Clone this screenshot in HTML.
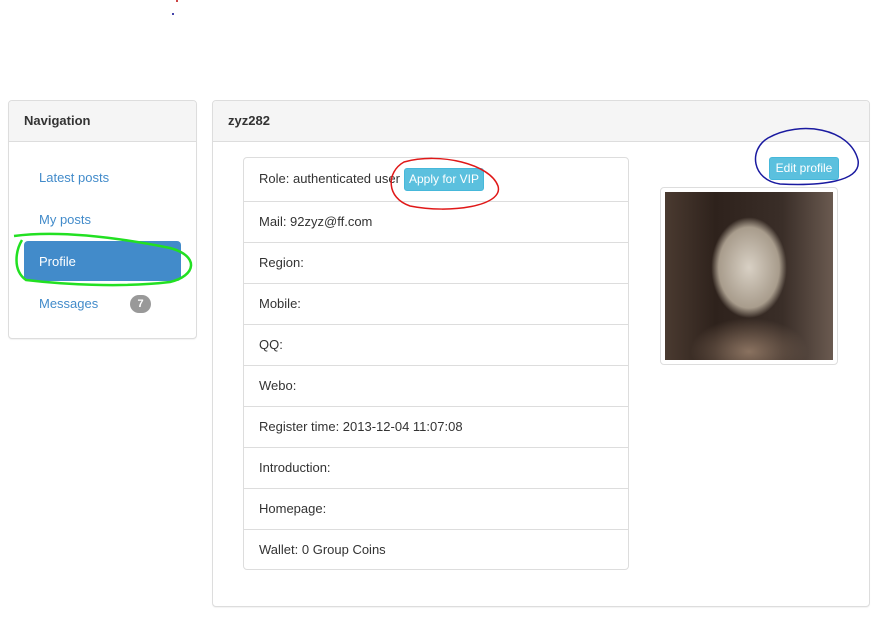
<!DOCTYPE html>
<html><head><style>
body{margin:0;width:880px;height:631px;background:#fff;font-family:"Liberation Sans",Arial,sans-serif;font-size:13px;color:#333;position:relative;overflow:hidden}
.panel{position:absolute;border:1px solid #ddd;border-radius:4px;background:#fff;box-shadow:0 1px 1px rgba(0,0,0,.05)}
.ph{height:40px;background:#f5f5f5;border-bottom:1px solid #ddd;border-radius:3px 3px 0 0;font-weight:bold;font-size:13px;line-height:40px;padding-left:15px}
.nav a{position:absolute;left:30px;color:#428bca;text-decoration:none}
.row{position:absolute;left:0;right:0;border-top:1px solid #ddd;padding-left:15px;box-sizing:border-box;line-height:40px}
.btn{position:absolute;background:#5bc0de;color:#fff;border-radius:3px;font-size:12px;text-align:center;border:1px solid #46b8da;box-sizing:border-box}
</style></head><body>
<div style="position:absolute;left:176px;top:0;width:2px;height:2px;background:#c44"></div>
<div style="position:absolute;left:172px;top:13px;width:2px;height:2px;background:#44a"></div>

<div class="panel nav" style="left:8px;top:100px;width:187px;height:237px">
 <div class="ph">Navigation</div>
 <a style="top:69px">Latest posts</a>
 <a style="top:111px">My posts</a>
 <div style="position:absolute;left:15px;top:140px;width:157px;height:40px;background:#428bca;border-radius:4px"></div>
 <a style="top:153px;color:#fff">Profile</a>
 <a style="top:195px">Messages</a>
 <div style="position:absolute;left:121px;top:194px;width:21px;height:18px;border-radius:9px;background:#999;color:#fff;font-weight:bold;font-size:11px;text-align:center;line-height:18px">7</div>
</div>

<div class="panel" style="left:212px;top:100px;width:656px;height:505px">
 <div class="ph">zyz282</div>
 <div style="position:absolute;left:30px;top:56px;width:386px;height:413px;border:1px solid #ddd;border-radius:4px;box-sizing:border-box">
  <div class="row" style="top:0;border-top:0;height:44px;line-height:42px">Role: authenticated user</div>
  <div class="row" style="top:43px">Mail: 92zyz@ff.com</div>
  <div class="row" style="top:84px">Region:</div>
  <div class="row" style="top:125px">Mobile:</div>
  <div class="row" style="top:166px">QQ:</div>
  <div class="row" style="top:207px">Webo:</div>
  <div class="row" style="top:248px">Register time: 2013-12-04 11:07:08</div>
  <div class="row" style="top:289px">Introduction:</div>
  <div class="row" style="top:330px">Homepage:</div>
  <div class="row" style="top:371px">Wallet: 0 Group Coins</div>
 </div>
 <div class="btn" style="left:191px;top:67px;width:80px;height:23px;line-height:21px">Apply for VIP</div>
 <div class="btn" style="left:556px;top:56px;width:70px;height:23px;line-height:21px">Edit profile</div>
 <div style="position:absolute;left:447px;top:86px;width:178px;height:178px;border:1px solid #ddd;border-radius:4px;box-sizing:border-box;padding:4px">
  <div style="width:168px;height:168px;background:radial-gradient(ellipse 30% 40% at 50% 45%,#d8d0c4 0%,#a89c8c 60%,transparent 75%),radial-gradient(ellipse 35% 20% at 50% 95%,#8a7260 0%,transparent 100%),linear-gradient(90deg,#4a3a30,#2e221c 30%,#3a2e28 70%,#6a5a50)"></div>
 </div>
</div>

<svg width="880" height="631" style="position:absolute;left:0;top:0" fill="none">
 <path d="M14 236 C60 230 120 238 170 248 C200 256 196 276 170 282 C120 288 60 284 26 280 C12 270 16 250 22 240" stroke="#22e022" stroke-width="2.5"/>
 <path d="M404 162 C440 152 490 164 498 186 C504 206 450 214 410 206 C386 198 386 172 404 162 Z" stroke="#e01818" stroke-width="1.5"/>
 <path d="M768 138 C800 120 850 128 858 160 C862 182 820 186 780 184 C752 180 748 150 768 138 Z" stroke="#1a1aa0" stroke-width="1.5"/>
</svg>
</body></html>
